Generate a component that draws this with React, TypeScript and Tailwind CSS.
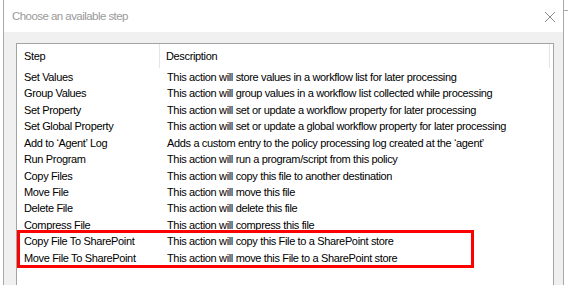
import React from 'react';

const steps: [string, string][] = [
  ['Set Values', 'This action will store values in a workflow list for later processing'],
  ['Group Values', 'This action will group values in a workflow list collected while processing'],
  ['Set Property', 'This action will set or update a workflow property for later processing'],
  ['Set Global Property', 'This action will set or update a global workflow property for later processing'],
  ['Add to \u2018Agent\u2019 Log', 'Adds a custom entry to the policy processing log created at the \u2018agent\u2019'],
  ['Run Program', 'This action will run a program/script from this policy'],
  ['Copy Files', 'This action will copy this file to another destination'],
  ['Move File', 'This action will move this file'],
  ['Delete File', 'This action will delete this file'],
  ['Compress File', 'This action will compress this file'],
  ['Copy File To SharePoint', 'This action will copy this File to a SharePoint store'],
  ['Move File To SharePoint', 'This action will move this File to a SharePoint store'],
];

export default function App() {
  return (
    <div className="w-[568px] h-[285px] overflow-hidden bg-white flex font-['Liberation_Sans',Arial,sans-serif]">
      {/* window edge */}
      <div className="w-[3px] shrink-0" />
      <div className="w-px shrink-0 bg-[#a9a9a9]" />

      <div className="w-[559px] shrink-0 flex flex-col">
        {/* Title bar */}
        <div className="h-[32px] shrink-0 bg-white flex items-center justify-between pl-[8px] pr-[7px]">
          <span className="text-[11.5px] text-[#9a9a9a] tracking-[-0.55px] pt-[2px]">
            Choose an available step
          </span>
          <svg width="12" height="12" viewBox="0 0 12 12" className="mt-[1px]">
            <path d="M1 1 L11 11 M11 1 L1 11" stroke="#8a8a8a" strokeWidth="1" fill="none" />
          </svg>
        </div>

        {/* Body */}
        <div className="flex-1 bg-[#f0f0f0] pt-[11px] pl-[12px] pr-[9px]">
          <div className="relative h-full border border-[#a3a3a3] border-b-0 bg-white text-[11px] text-black tracking-[-0.35px]">
            {/* Header */}
            <div className="h-[24px] flex items-center relative">
              <div className="w-[143px] h-full pl-[7px] flex items-center border-r border-[#e5e5e5]">Step</div>
              <div className="pl-[6px]">Description</div>
              <div className="absolute right-[3px] top-0 h-full w-px bg-[#e5e5e5]" />
            </div>

            {/* Rows */}
            <div className="flex flex-col pt-[1px]">
              {steps.map(([name, desc]) => (
                <div key={name} className="h-[16.45px] flex items-center">
                  <div className="w-[144px] pl-[7px] whitespace-nowrap">{name}</div>
                  <div className="pl-[6px] whitespace-nowrap">{desc}</div>
                </div>
              ))}
            </div>

            {/* Highlight box */}
            <div className="absolute left-0 top-[186px] w-[457px] h-[38px] border-[3px] border-[#ff0000]" />
          </div>
        </div>
      </div>

      <div className="w-px shrink-0 bg-[#a9a9a9] relative">
        <div className="absolute left-0 top-[10px] w-[5px] h-px bg-[#a9a9a9]" />
      </div>
      <div className="w-[4px] shrink-0" />
    </div>
  );
}
